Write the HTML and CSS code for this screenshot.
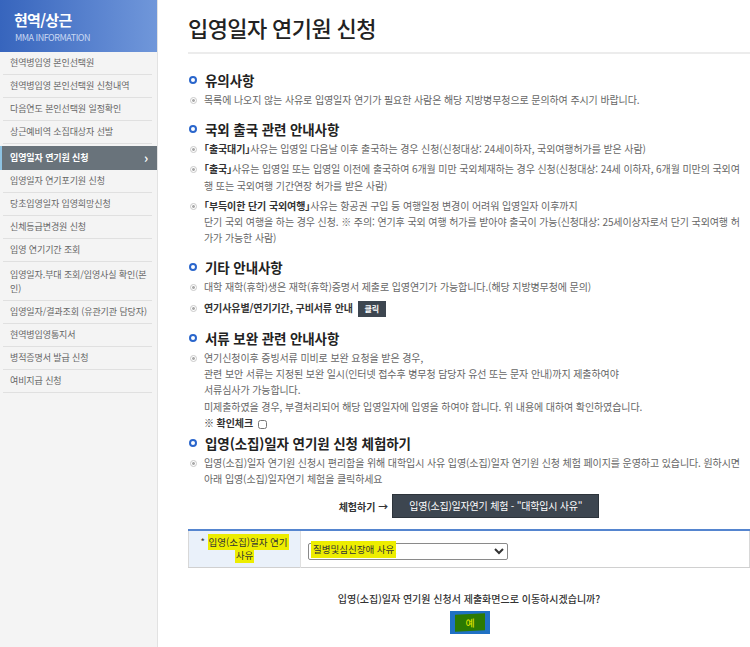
FILE: index.html
```html
<!DOCTYPE html>
<html lang="ko">
<head>
    <meta charset="UTF-8">
    <meta name="viewport" content="width=device-width, initial-scale=1.0">
    <title>입영일자 연기원 신청</title>
    <link rel="stylesheet" href="styles.css">
</head>
<body>
    <div class="wrap">
        <!-- 좌측 메뉴 -->
        <aside class="side">
            <div class="side-head">
                <h2>현역/상근</h2>
                <p>MMA INFORMATION</p>
            </div>
            <ul class="side-menu">
                <li><a href="#">현역병입영 본인선택원</a></li>
                <li><a href="#">현역병입영 본인선택원 신청내역</a></li>
                <li><a href="#">다음연도 본인선택원 일정확인</a></li>
                <li><a href="#">상근예비역 소집대상자 선발</a></li>
                <li class="on"><a href="#">입영일자 연기원 신청 <span class="arr">&#8250;</span></a></li>
                <li><a href="#">입영일자 연기포기원 신청</a></li>
                <li><a href="#">당초입영일자 입영희망신청</a></li>
                <li><a href="#">신체등급변경원 신청</a></li>
                <li><a href="#">입영 연기기간 조회</a></li>
                <li class="two"><a href="#">입영일자.부대 조회/입영사실 확인(본<br>인)</a></li>
                <li><a href="#">입영일자/결과조회 (유관기관 담당자)</a></li>
                <li><a href="#">현역병입영통지서</a></li>
                <li><a href="#">병적증명서 발급 신청</a></li>
                <li><a href="#">여비지급 신청</a></li>
            </ul>
        </aside>

        <main class="content">
            <h1 class="page-title">입영일자 연기원 신청</h1>

            <div class="section">
                <h3 class="tit">유의사항</h3>
                <ul class="notice">
                    <li>목록에 나오지 않는 사유로 입영일자 연기가 필요한 사람은 해당 지방병무청으로 문의하여 주시기 바랍니다.</li>
                </ul>
            </div>

            <div class="section">
                <h3 class="tit">국외 출국 관련 안내사항</h3>
                <ul class="notice">
                    <li><b>「출국대기」</b>사유는 입영일 다음날 이후 출국하는 경우 신청(신청대상: 24세이하자, 국외여행허가를 받은 사람)</li>
                    <li><b>「출국」</b>사유는 입영일 또는 입영일 이전에 출국하여 6개월 미만 국외체재하는 경우 신청(신청대상: 24세 이하자, 6개월 미만의 국외여<br>행 또는 국외여행 기간연장 허가를 받은 사람)</li>
                    <li><b>「부득이한 단기 국외여행」</b>사유는 항공권 구입 등 여행일정 변경이 어려워 입영일자 이후까지<br>단기 국외 여행을 하는 경우 신청. ※ 주의: 연기후 국외 여행 허가를 받아야 출국이 가능(신청대상: 25세이상자로서 단기 국외여행 허<br>가가 가능한 사람)</li>
                </ul>
            </div>

            <div class="section">
                <h3 class="tit">기타 안내사항</h3>
                <ul class="notice">
                    <li>대학 재학(휴학)생은 재학(휴학)증명서 제출로 입영연기가 가능합니다.(해당 지방병무청에 문의)</li>
                    <li><b>연기사유별/연기기간, 구비서류 안내</b> <a href="#" class="btn-s">클릭</a></li>
                </ul>
            </div>

            <div class="section">
                <h3 class="tit">서류 보완 관련 안내사항</h3>
                <ul class="notice">
                    <li>연기신청이후 증빙서류 미비로 보완 요청을 받은 경우,<br>관련 보안 서류는 지정된 보완 일시(인터넷 접수후 병무청 담당자 유선 또는 문자 안내)까지 제출하여야<br>서류심사가 가능합니다.<br>미제출하였을 경우, 부결처리되어 해당 입영일자에 입영을 하여야 합니다. 위 내용에 대하여 확인하였습니다.<br><b>※ 확인체크</b> <input type="checkbox" class="chk"></li>
                </ul>
            </div>

            <div class="section tight">
                <h3 class="tit">입영(소집)일자 연기원 신청 체험하기</h3>
                <ul class="notice">
                    <li>입영(소집)일자 연기원 신청시 편리함을 위해 대학입시 사유 입영(소집)일자 연기원 신청 체험 페이지를 운영하고 있습니다. 원하시면<br>아래 입영(소집)일자연기 체험을 클릭하세요</li>
                </ul>
                <div class="try-row">
                    <b>체험하기 &rarr;</b>
                    <a href="#" class="btn-dark">입영(소집)일자연기 체험 - "대학입시 사유"</a>
                </div>
            </div>

            <table class="form-table">
                <tr>
                    <th>* <mark>입영(소집)일자 연기</mark><br><mark>사유</mark></th>
                    <td>
                        <select class="sel">
                            <option>질병및심신장애 사유</option>
                        </select>
                        <mark class="sel-mark">질병및심신장애 사유</mark>
                    </td>
                </tr>
            </table>

            <p class="confirm">입영(소집)일자 연기원 신청서 제출화면으로 이동하시겠습니까?</p>
            <div class="confirm-btn">
                <a href="#" class="btn-yes"><span>예</span></a>
            </div>
        </main>
    </div>
</body>
</html>
```

FILE: styles.css
```css
/* 기본 */
body {
    margin: 0;
    font-family: "Noto Sans CJK KR", "Noto Sans", sans-serif;
    color: #666;
    background: #fff;
    overflow: hidden;
}

a {
    text-decoration: none;
    color: inherit;
}

ul {
    margin: 0;
    padding: 0;
    list-style: none;
}

.wrap {
    display: flex;
    min-height: 647px;
}

/* 좌측 메뉴 */
.side {
    width: 157px;
    flex-shrink: 0;
    background: #f4f4f4;
    border-right: 1px solid #e2e2e2;
}

.side-head {
    height: 52px;
    box-sizing: border-box;
    padding: 11px 0 0 14px;
    background: linear-gradient(to right, #3765bd, #5f88d2 70%, #7097da);
}

.side-head h2 {
    margin: 0;
    font-size: 15px;
    line-height: 18px;
    color: #fff;
    letter-spacing: -0.7px;
}

.side-head p {
    margin: 3px 0 0 1px;
    font-size: 9px;
    line-height: 11px;
    color: #c9d8f2;
    letter-spacing: -0.5px;
}

.side-menu li {
    padding: 0 5px 0 3px;
}

.side-menu li a {
    display: block;
    height: 22px;
    line-height: 22px;
    padding-left: 7px;
    font-size: 9px;
    color: #666;
    border-bottom: 1px solid #e0e0e0;
    letter-spacing: -0.1px;
}

.side-menu li.on {
    padding: 0;
    margin-top: 2px;
}

.side-menu li.on a {
    position: relative;
    height: 24px;
    line-height: 24px;
    padding-left: 8px;
    background: #69737b;
    border-left: 2px solid #8ec3e3;
    border-bottom: none;
    color: #fff;
    font-weight: bold;
    font-size: 9px;
}

.side-menu li.on .arr {
    position: absolute;
    right: 9px;
    top: 0;
    font-size: 13px;
}

.side-menu li.two a {
    height: auto;
    line-height: 14px;
    padding-top: 6px;
    padding-bottom: 4px;
}

/* 본문 */
.content {
    flex: 1;
    min-width: 0;
    padding: 10px 0 0 30px;
}

.page-title {
    margin: 0;
    height: 42px;
    font-size: 22px;
    font-weight: 500;
    line-height: 34px;
    color: #222;
    letter-spacing: -0.6px;
    border-bottom: 2px solid #ececec;
}

.section {
    margin-top: 11px;
}

.section:first-of-type {
    margin-top: 16px;
}

.section.tight {
    margin-top: 2px;
}

.tit {
    position: relative;
    margin: 0;
    padding-left: 17px;
    font-size: 13.5px;
    line-height: 20px;
    color: #222;
    letter-spacing: -0.1px;
}

.tit::before {
    content: "";
    position: absolute;
    left: 1px;
    top: 6px;
    width: 4px;
    height: 4px;
    border: 2.5px solid #2a66cc;
    border-radius: 50%;
}

.notice {
    padding-top: 2px;
}

.notice li {
    position: relative;
    margin-top: 4px;
    padding-left: 16px;
    font-size: 10px;
    line-height: 16.2px;
    letter-spacing: -0.1px;
    white-space: nowrap;
}

.notice li:first-child {
    margin-top: 0;
}

.notice li::before {
    content: "";
    position: absolute;
    left: 2px;
    top: 5px;
    width: 5px;
    height: 5px;
    border: 1px solid #c9c9c9;
    border-radius: 50%;
    background: radial-gradient(circle, #aaa 0 1.2px, #fff 1.6px);
}

.notice b {
    color: #333;
    font-feature-settings: "halt";
}

.btn-s {
    display: inline-block;
    margin-left: 2px;
    padding: 0 7px;
    height: 16px;
    line-height: 16px;
    background: #3d4650;
    color: #fff;
    font-size: 8px;
    font-weight: bold;
    vertical-align: middle;
}

.chk {
    width: 9px;
    height: 9px;
    margin: 0 0 0 2px;
    vertical-align: middle;
}

.try-row {
    display: flex;
    justify-content: center;
    align-items: center;
    gap: 4px;
    width: 562px;
    margin-top: 7px;
    font-size: 10px;
    color: #333;
}

.btn-dark {
    display: inline-block;
    padding: 0 16px;
    height: 22px;
    line-height: 22px;
    background: #3d4650;
    color: #fff;
    font-size: 10px;
    letter-spacing: -0.2px;
    border: 1px solid #2d343b;
}

/* 입력 테이블 */
.form-table {
    width: 562px;
    margin-top: 11px;
    border-collapse: collapse;
    border-top: 2px solid #5585cf;
    border-bottom: 1px solid #d0d0d0;
    border-left: 1px solid #d8d8d8;
    border-right: 1px solid #d8d8d8;
}

.form-table th {
    width: 111px;
    height: 36px;
    padding: 0;
    background: #eaf1fa;
    font-size: 9.5px;
    font-weight: normal;
    line-height: 13px;
    color: #333;
    border-right: 1px solid #e0e0e0;
}

.form-table td {
    position: relative;
    padding: 0 0 0 7px;
}

mark {
    background: #eded00;
    color: #333;
    padding: 1px 1px;
}

.sel {
    width: 200px;
    height: 17px;
    font-size: 9.5px;
    font-family: "Noto Sans CJK KR", sans-serif;
    color: #333;
    border: 1px solid #8a8a8a;
    border-radius: 2px;
    padding: 0 2px;
    background: #fff;
}

.sel-mark {
    position: absolute;
    left: 10px;
    top: 10px;
    height: 17px;
    line-height: 17px;
    padding: 0 2px 0 2px;
    font-size: 9.5px;
}

.confirm {
    margin: 23px 0 0 0;
    width: 562px;
    text-align: center;
    font-size: 10px;
    color: #333;
    font-weight: 500;
}

.confirm-btn {
    width: 562px;
    display: flex;
    justify-content: center;
    margin-top: 5px;
}

.btn-yes {
    display: inline-block;
    width: 40px;
    height: 23px;
    box-sizing: border-box;
    padding: 3px 5px;
    margin-left: 1px;
    background: #2071c4;
}

.btn-yes span {
    display: block;
    height: 17px;
    line-height: 17px;
    background: #2c7a02;
    color: #ecec00;
    font-size: 10px;
    text-align: center;
    transform: skewY(-3deg);
}
```
